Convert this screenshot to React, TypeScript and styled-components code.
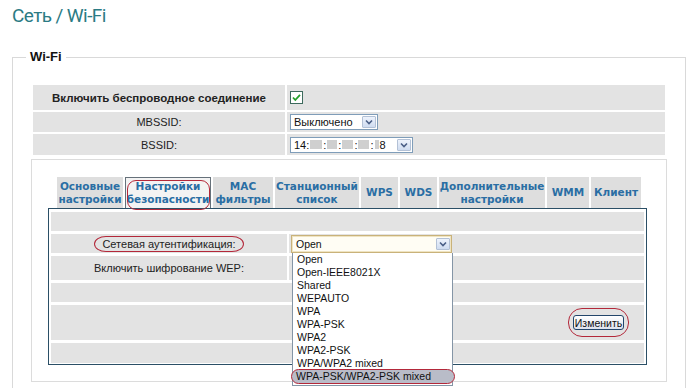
import React from "react";
import styled, { createGlobalStyle } from "styled-components";

const GlobalStyle = createGlobalStyle`
  html, body {
    margin: 0;
    padding: 0;
    background: #fff;
    overflow: hidden;
  }
  body {
    font-family: "Liberation Sans", Arial, sans-serif;
    font-size: 11px;
    color: #222;
  }
`;

const Page = styled.div`
  width: 694px;
  height: 388px;
  padding: 0 0 0 12px;
  box-sizing: border-box;
  overflow: hidden;
`;

const Title = styled.h1`
  margin: 0;
  padding-top: 4px;
  height: 24px;
  line-height: 24px;
  font-family: Roboto, "Noto Sans", sans-serif;
  font-weight: 400;
  font-size: 19px;
  letter-spacing: -0.6px;
  color: #2b7b84;
`;

const Fieldset = styled.fieldset`
  margin: 22px 0 0 0;
  width: 674px;
  box-sizing: border-box;
  border: 1px solid #d9d9d9;
  padding: 21px 18px 6px 18px;
`;

const Legend = styled.legend`
  margin-left: -5px;
  padding: 0 4px;
  height: 14px;
  line-height: 14px;
  font-size: 13px;
  font-weight: bold;
  color: #111;
`;

const MainTable = styled.div`
  display: flex;
  flex-direction: column;
  gap: 2px;
  margin: 0 2px;
`;

const Row = styled.div<{ $h: number; $label: number }>`
  display: grid;
  grid-template-columns: ${(p) => p.$label}px 1fr;
  gap: 2px;
  height: ${(p) => p.$h}px;
`;

const FullRow = styled.div<{ $h: number }>`
  height: ${(p) => p.$h}px;
  background: #e3e3e3;
  display: flex;
  align-items: center;
  justify-content: flex-end;
  padding-right: 20px;
`;

const LabelCell = styled.div<{ $bold?: boolean }>`
  background: #e3e3e3;
  display: flex;
  align-items: center;
  justify-content: center;
  font-weight: ${(p) => (p.$bold ? "bold" : "normal")};
  font-size: ${(p) => (p.$bold ? "11.5px" : "11px")};
  color: #222;
`;

const ValueCell = styled.div`
  background: #e3e3e3;
  display: flex;
  align-items: center;
  padding-left: 3px;
  position: relative;
`;

const Select = styled.div<{ $w: number }>`
  width: ${(p) => p.$w}px;
  height: 16px;
  box-sizing: border-box;
  border: 1px solid #7f9db9;
  background: #fff;
  display: flex;
  align-items: center;
  padding-left: 3px;
  font-size: 11px;
  color: #111;
`;

const SelectText = styled.span`
  flex: 1;
  display: flex;
  align-items: center;
  white-space: nowrap;
`;

const ArrowBox = styled.span`
  width: 14px;
  height: 12px;
  margin: 0 1px;
  box-sizing: border-box;
  border: 1px solid #b3c1d6;
  border-radius: 1px;
  background: linear-gradient(#eef3fc, #cfdcf0);
  display: flex;
  align-items: center;
  justify-content: center;
`;

const Masked = styled.span<{ $w: number }>`
  display: inline-block;
  width: ${(p) => p.$w}px;
  height: 9px;
  background: #cfcfcf;
  margin: 0 1px;
`;

const Panel = styled.div`
  margin-top: 4px;
  border: 1px solid #dcdcdc;
  padding: 17px 19px 16px 16px;
`;

const Tabs = styled.div`
  display: flex;
  gap: 2px;
  margin-left: 9px;
  height: 31px;
`;

const Tab = styled.div<{ $w: number; $active?: boolean }>`
  position: relative;
  width: ${(p) => p.$w}px;
  height: 31px;
  box-sizing: border-box;
  background: ${(p) => (p.$active ? "#f3f3f3" : "#dedede")};
  border: ${(p) => (p.$active ? "1px solid #66717a" : "none")};
  border-bottom: none;
  display: flex;
  flex-direction: column;
  align-items: center;
  justify-content: center;
  font-family: "DejaVu Sans", Verdana, sans-serif;
  font-weight: bold;
  font-size: 10.5px;
  line-height: 13px;
  color: #2a6ea4;
  white-space: nowrap;
`;

const TabMark = styled.span`
  position: absolute;
  top: 2px;
  left: 1px;
  right: 0px;
  bottom: -2px;
  border: 1px solid #b3283a;
  border-radius: 9px;
  pointer-events: none;
  z-index: 2;
`;

const Content = styled.div`
  border: 1px solid #2b4f66;
  padding: 3px 2px 1px 2px;
  display: flex;
  flex-direction: column;
  gap: 3px;
`;

const Marked = styled.span`
  display: inline-block;
  border: 1px solid #b3283a;
  border-radius: 12px / 8px;
  padding: 1px 7px;
  line-height: 12px;
`;

const AuthSelect = styled.div`
  position: relative;
  width: 161px;
  height: 18px;
  margin-left: -1px;
  box-sizing: border-box;
  border: 1px solid #c9b27a;
  box-shadow: inset 0 0 0 1px #efe4c2;
  background: #fffdf4;
  display: flex;
  align-items: center;
  padding-left: 4px;
  font-size: 10.5px;
  color: #111;
`;

const Dropdown = styled.div`
  position: absolute;
  top: 17px;
  left: 0;
  width: 161px;
  box-sizing: border-box;
  border: 1px solid #8495a6;
  border-top: none;
  background: #fff;
  z-index: 5;
  padding-bottom: 1px;
`;

const Option = styled.div<{ $marked?: boolean }>`
  height: ${(p) => (p.$marked ? "15px" : "13px")};
  line-height: ${(p) => (p.$marked ? "15px" : "13px")};
  padding-left: 4px;
  font-size: 10.5px;
  color: #111;
  white-space: nowrap;
  box-sizing: border-box;
  ${(p) =>
    p.$marked
      ? `
    background: #b9bcc8;
    border: 1px solid #b3283a;
    border-radius: 8px;
    margin: -1px -3px 0 -2px;
    line-height: 13px;
  `
      : ""}
`;

const ButtonMark = styled.span`
  display: inline-flex;
  padding: 6px 4px;
  border: 1px solid #b3283a;
  border-radius: 14px;
  margin-right: -5px;
`;

const Button = styled.button`
  width: 51px;
  height: 15px;
  padding: 0;
  border: 1px solid #23466b;
  border-radius: 3px;
  background: linear-gradient(#ffffff, #dde3ee);
  font-family: "Liberation Sans", Arial, sans-serif;
  font-size: 10.5px;
  color: #111;
  line-height: 12px;
`;

const Chevron = () => (
  <svg width="8" height="6" viewBox="0 0 8 6">
    <path d="M1 1.5 L4 4.5 L7 1.5" fill="none" stroke="#4a5f86" strokeWidth="1.6" />
  </svg>
);

const CheckBox = () => (
  <svg width="13" height="13" viewBox="0 0 13 13">
    <rect x="0.5" y="0.5" width="12" height="12" fill="#fff" stroke="#3d6a5d" />
    <path d="M3 6.5 L5.3 9 L10 3.8" fill="none" stroke="#25a02a" strokeWidth="1.8" />
  </svg>
);

const tabs = [
  { lines: ["Основные", "настройки"], w: 66 },
  { lines: ["Настройки", "безопасности"], w: 86, active: true },
  { lines: ["MAC", "фильтры"], w: 60 },
  { lines: ["Станционный", "список"], w: 84 },
  { lines: ["WPS"], w: 37 },
  { lines: ["WDS"], w: 37 },
  { lines: ["Дополнительные", "настройки"], w: 106 },
  { lines: ["WMM"], w: 42 },
  { lines: ["Клиент"], w: 50 },
];

const authOptions = [
  "Open",
  "Open-IEEE8021X",
  "Shared",
  "WEPAUTO",
  "WPA",
  "WPA-PSK",
  "WPA2",
  "WPA2-PSK",
  "WPA/WPA2 mixed",
];

const App = () => {
  return (
    <Page>
      <GlobalStyle />
      <Title>Сеть / Wi-Fi</Title>
      <Fieldset>
        <Legend>Wi-Fi</Legend>
        <MainTable>
          <Row $h={25} $label={252}>
            <LabelCell $bold>Включить беспроводное соединение</LabelCell>
            <ValueCell>
              <CheckBox />
            </ValueCell>
          </Row>
          <Row $h={20} $label={252}>
            <LabelCell>MBSSID:</LabelCell>
            <ValueCell>
              <Select $w={88}>
                <SelectText>Выключено</SelectText>
                <ArrowBox>
                  <Chevron />
                </ArrowBox>
              </Select>
            </ValueCell>
          </Row>
          <Row $h={21} $label={252}>
            <LabelCell>BSSID:</LabelCell>
            <ValueCell>
              <Select $w={123}>
                <SelectText>
                  14:<Masked $w={12} />:<Masked $w={10} />:<Masked $w={11} />:
                  <Masked $w={11} />:<Masked $w={4} />8
                </SelectText>
                <ArrowBox>
                  <Chevron />
                </ArrowBox>
              </Select>
            </ValueCell>
          </Row>
        </MainTable>

        <Panel>
          <Tabs>
            {tabs.map((t) => (
              <Tab key={t.lines.join(" ")} $w={t.w} $active={t.active}>
                {t.lines.map((l) => (
                  <span key={l}>{l}</span>
                ))}
                {t.active && <TabMark />}
              </Tab>
            ))}
          </Tabs>
          <Content>
            <FullRow $h={19} />
            <Row $h={19} $label={236}>
              <LabelCell>
                <Marked>Сетевая аутентификация:</Marked>
              </LabelCell>
              <ValueCell>
                <AuthSelect>
                  <SelectText>Open</SelectText>
                  <ArrowBox>
                    <Chevron />
                  </ArrowBox>
                  <Dropdown>
                    {authOptions.map((o) => (
                      <Option key={o}>{o}</Option>
                    ))}
                    <Option $marked>WPA-PSK/WPA2-PSK mixed</Option>
                  </Dropdown>
                </AuthSelect>
              </ValueCell>
            </Row>
            <Row $h={24} $label={236}>
              <LabelCell>Включить шифрование WEP:</LabelCell>
              <ValueCell />
            </Row>
            <FullRow $h={19} />
            <FullRow $h={35}>
              <ButtonMark>
                <Button>Изменить</Button>
              </ButtonMark>
            </FullRow>
            <FullRow $h={20} />
          </Content>
        </Panel>
      </Fieldset>
    </Page>
  );
};

export default App;
